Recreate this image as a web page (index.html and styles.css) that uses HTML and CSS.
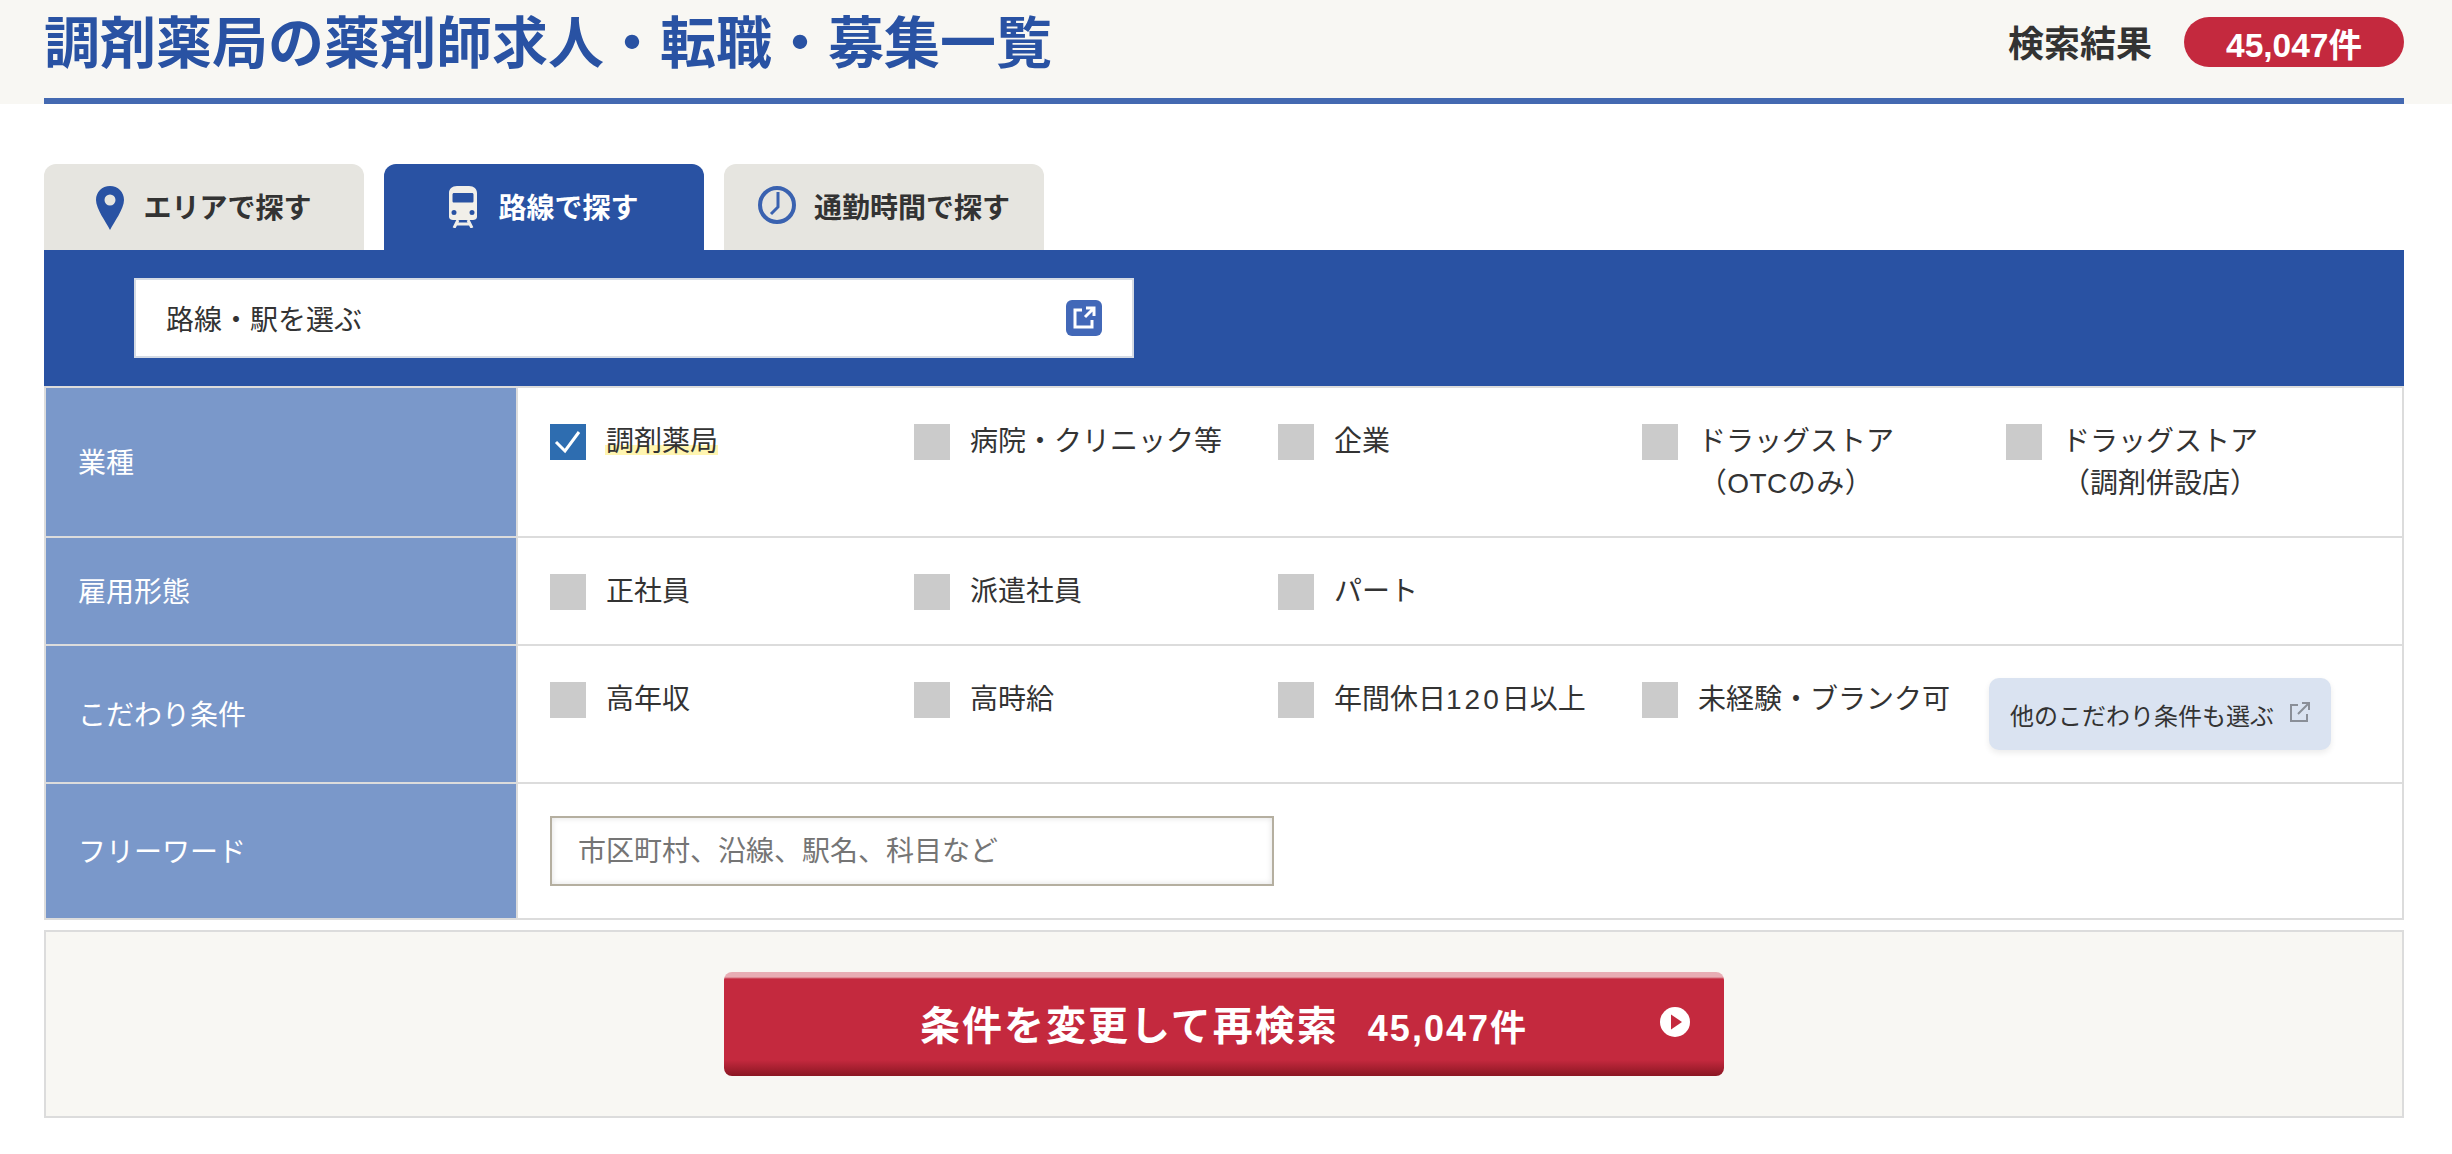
FILE: index.html
```html
<!DOCTYPE html>
<html lang="ja">
<head>
<meta charset="utf-8">
<title>調剤薬局の薬剤師求人・転職・募集一覧</title>
<link rel="stylesheet" href="styles.css">
</head>
<body>
<header class="page-head">
  <div class="page-head-inner">
    <h1 class="page-title">調剤薬局の薬剤師求人・転職・募集一覧</h1>
    <div class="result">
      <span class="result-label">検索結果</span>
      <span class="result-badge">45,047件</span>
    </div>
  </div>
</header>
<main class="wrap">
  <nav class="tabs">
    <a class="tab">
      <svg class="icon-pin" viewBox="0 0 28 44"><path fill="#2952a3" fill-rule="evenodd" d="M14 0C6 0 0 6 0 14c0 9 10 22 14 30 4-8 14-21 14-30C28 6 22 0 14 0zm0 8.500a5.500 5.500 0 1 1 0 11 5.500 5.500 0 0 1 0-11z"/></svg>
      <span class="tab-text">エリアで探す</span>
    </a>
    <a class="tab tab-active">
      <svg class="icon-train" viewBox="0 0 28 42"><path fill="#f1efe9" fill-rule="evenodd" d="M8 0h12c5 0 8 3 8 7v24c0 2-2 3-4 3H4c-2 0-4-1-4-3V7c0-4 3-7 8-7zM5 7c-1 0-1.500.7-1.500 1.500V15c0 1 .5 1.500 1.500 1.500h18c1 0 1.500-.5 1.500-1.500V8.500C24.500 7.700 24 7 23 7zm0 17a2.500 2.500 0 1 0 0 5 2.500 2.500 0 0 0 0-5zm18 0a2.500 2.500 0 1 0 0 5 2.500 2.500 0 0 0 0-5z"/><path fill="none" stroke="#f1efe9" stroke-width="3" d="M9 34 5 42M19 34l4 8M7 38h14"/></svg>
      <span class="tab-text">路線で探す</span>
    </a>
    <a class="tab">
      <svg class="icon-clock" viewBox="0 0 38 38"><circle cx="19" cy="19" r="17" fill="none" stroke="#3a62b0" stroke-width="4"/><path fill="none" stroke="#3a62b0" stroke-width="3" d="M20 6v15l-7 7"/></svg>
      <span class="tab-text">通勤時間で探す</span>
    </a>
  </nav>

  <section class="area-bar">
    <a class="area-select">
      <span>路線・駅を選ぶ</span>
      <span class="ext-badge">
        <svg viewBox="0 0 36 36"><path fill="none" stroke="#fff" stroke-width="3" d="M16 10H9v17h17v-7M19 17 27 9M20 8h8v8"/></svg>
      </span>
    </a>
  </section>

  <section class="conditions">
    <div class="row row-type">
      <div class="row-label">業種</div>
      <div class="row-cells">
        <label class="opt">
          <span class="box box-on"><svg viewBox="0 0 36 36"><path fill="none" stroke="#fff" stroke-width="3" d="M6 18l9 9L29 8"/></svg></span>
          <span class="opt-text"><span class="marked">調剤薬局</span></span>
        </label>
        <label class="opt"><span class="box"></span><span class="opt-text">病院・クリニック等</span></label>
        <label class="opt"><span class="box"></span><span class="opt-text">企業</span></label>
        <label class="opt"><span class="box"></span><span class="opt-text opt-center">ドラッグストア<br><span class="otc">（OTCのみ）</span></span></label>
        <label class="opt"><span class="box"></span><span class="opt-text opt-center">ドラッグストア<br>（調剤併設店）</span></label>
      </div>
    </div>
    <div class="row row-emp">
      <div class="row-label">雇用形態</div>
      <div class="row-cells">
        <label class="opt"><span class="box"></span><span class="opt-text">正社員</span></label>
        <label class="opt"><span class="box"></span><span class="opt-text">派遣社員</span></label>
        <label class="opt"><span class="box"></span><span class="opt-text">パート</span></label>
      </div>
    </div>
    <div class="row row-pref">
      <div class="row-label">こだわり条件</div>
      <div class="row-cells">
        <label class="opt"><span class="box"></span><span class="opt-text">高年収</span></label>
        <label class="opt"><span class="box"></span><span class="opt-text">高時給</span></label>
        <label class="opt"><span class="box"></span><span class="opt-text">年間休日<span class="num">120</span>日以上</span></label>
        <label class="opt"><span class="box"></span><span class="opt-text">未経験・ブランク可</span></label>
        <a class="more-btn">
          <span>他のこだわり条件も選ぶ</span>
          <svg viewBox="0 0 20 20"><path fill="none" stroke="#8a8f98" stroke-width="2" d="M8 3H1v16h16v-7"/><path fill="none" stroke="#8a8f98" stroke-width="2" d="M8 12l10-10M12 1h7v7"/></svg>
        </a>
      </div>
    </div>
    <div class="row row-free">
      <div class="row-label">フリーワード</div>
      <div class="row-free-cell">
        <input class="free-input" type="text" placeholder="市区町村、沿線、駅名、科目など">
      </div>
    </div>
  </section>

  <section class="submit-panel">
    <button class="submit-btn" type="button">
      <span class="submit-main">条件を変更して再検索</span>
      <span class="submit-count">45,047件</span>
      <svg class="submit-arrow" viewBox="0 0 30 30"><circle cx="15" cy="15" r="15" fill="#fff"/><path fill="#c4293e" d="M11 7.500 22 15l-11 7.500z"/></svg>
    </button>
  </section>
</main>
</body>
</html>
```
FILE: styles.css
```css
* { box-sizing: border-box; }
html, body { margin: 0; padding: 0; background: #fff; }
body {
  font-family: "Liberation Sans", "Noto Sans CJK JP", sans-serif;
  font-size: 28px;
  color: #333;
}

.page-head { height: 104px; background: #f8f7f3; }
.page-head-inner {
  width: 2360px;
  height: 104px;
  margin-left: 44px;
  border-bottom: 6px solid #4469b1;
  display: flex;
  align-items: center;
  justify-content: space-between;
}
.page-title {
  margin: 0 0 10px;
  font-size: 56px;
  line-height: 68px;
  font-weight: 700;
  color: #2952a3;
}
.result { display: flex; align-items: center; gap: 32px; margin-bottom: 14px; }
.result-label { font-size: 36px; font-weight: 700; line-height: 50px; color: #333; margin-top: 6px; }
.result-badge {
  width: 220px;
  height: 50px;
  border-radius: 25px;
  background: #c4293e;
  color: #fff;
  font-size: 33.500px;
  font-weight: 700;
  display: flex;
  align-items: center;
  justify-content: center;
}

.wrap { width: 2360px; margin-left: 44px; }

.tabs { display: flex; gap: 20px; padding-top: 60px; }
.tab {
  width: 320px;
  height: 86px;
  background: #e6e5e0;
  border-radius: 12px 12px 0 0;
  display: flex;
  align-items: center;
  justify-content: center;
  gap: 21px;
  font-weight: 700;
  color: #333;
}
.tab-text { margin-bottom: 2px; }
.tab-active { background: #2952a3; color: #fff; }
.icon-pin { width: 28px; height: 44px; margin-top: 2px; margin-right: -2px; }
.icon-train { width: 28px; height: 42px; }
.icon-clock { width: 38px; height: 38px; margin-right: -3px; margin-bottom: 4px; }

.area-bar { background: #2952a3; padding: 28px 0 28px 90px; }
.area-select {
  width: 1000px;
  height: 80px;
  background: #fff;
  border: 2px solid #d5dbe4;
  padding: 0 30px 0 30px;
  display: flex;
  align-items: center;
  justify-content: space-between;
  color: #333;
}
.ext-badge { width: 36px; height: 36px; border-radius: 6px; background: #4268b8; display: block; }
.ext-badge svg { width: 36px; height: 36px; display: block; }

.conditions { border: 2px solid #dcdcdc; border-bottom: 0; }
.row { display: flex; border-bottom: 2px solid #dcdcdc; }
.row-type { height: 150px; }
.row-emp { height: 108px; }
.row-pref { height: 138px; }
.row-free { height: 136px; }
.row-label {
  width: 470px;
  flex: none;
  background: #7a98ca;
  color: #fff;
  padding: 0 0 2px 32px;
  display: flex;
  align-items: center;
}
.row-cells, .row-free-cell {
  flex: 1;
  border-left: 2px solid #dcdcdc;
  padding-left: 32px;
}
.row-cells {
  display: grid;
  grid-template-columns: repeat(5, 364px);
  align-content: start;
  padding-top: 36px;
}
.row-free-cell { display: flex; align-items: center; }

.opt { display: flex; align-items: flex-start; gap: 20px; white-space: nowrap; }
.box { width: 36px; height: 36px; flex: none; background: #cbcbcb; display: block; }
.box svg { width: 36px; height: 36px; display: block; }
.box-on { background: #2e6db0; }
.opt-text { display: block; line-height: 42px; margin-top: -3px; color: #333; }
.opt-center { text-align: center; }
.otc { display: inline-block; padding-right: 20px; letter-spacing: 0.500px; }
.num { letter-spacing: 3px; }
.marked {
  display: block;
  margin-left: -1px;
  padding: 0 0 0 1px;
  background: linear-gradient(#fff5b0, #fff5b0) no-repeat 0 24px / 100% 10px;
}

.more-btn {
  width: 342px;
  height: 72px;
  margin: -4px 0 0 -17px;
  background: #dae3f1;
  border-radius: 10px;
  box-shadow: 0 3px 6px rgba(0, 0, 0, 0.08);
  font-size: 24px;
  color: #333;
  display: flex;
  align-items: center;
  justify-content: center;
  gap: 16px;
  white-space: nowrap;
}
.more-btn svg { width: 20px; height: 20px; margin-bottom: 4px; }

.free-input {
  width: 724px;
  height: 70px;
  border: 2px solid #b5afa0;
  background: #fff;
  box-shadow: inset 0 0 6px rgba(0, 0, 0, 0.12);
  padding: 2px 26px 0;
  font: inherit;
  color: #333;
}
.free-input::placeholder { color: #757575; opacity: 1; }

.submit-panel {
  margin-top: 10px;
  height: 188px;
  background: #f8f7f3;
  border: 2px solid #dcdcdc;
  padding-left: 678px;
  padding-top: 40px;
}
.submit-btn {
  position: relative;
  width: 1000px;
  height: 104px;
  border: 0;
  border-radius: 8px;
  padding: 0 0 2px;
  background: linear-gradient(#e8adb4 0, #e8adb4 5px, #c4293e 7px, #c4293e 88px, #8a1622 100%);
  color: #fff;
  font-family: inherit;
  font-weight: 700;
  display: flex;
  align-items: center;
  justify-content: center;
  gap: 29px;
}
.submit-main { font-size: 40px; letter-spacing: 2px; }
.submit-count { font-size: 36px; letter-spacing: 2px; margin-top: 4px; }
.submit-arrow {
  position: absolute;
  right: 34px;
  top: 35px;
  width: 30px;
  height: 30px;
}
```
